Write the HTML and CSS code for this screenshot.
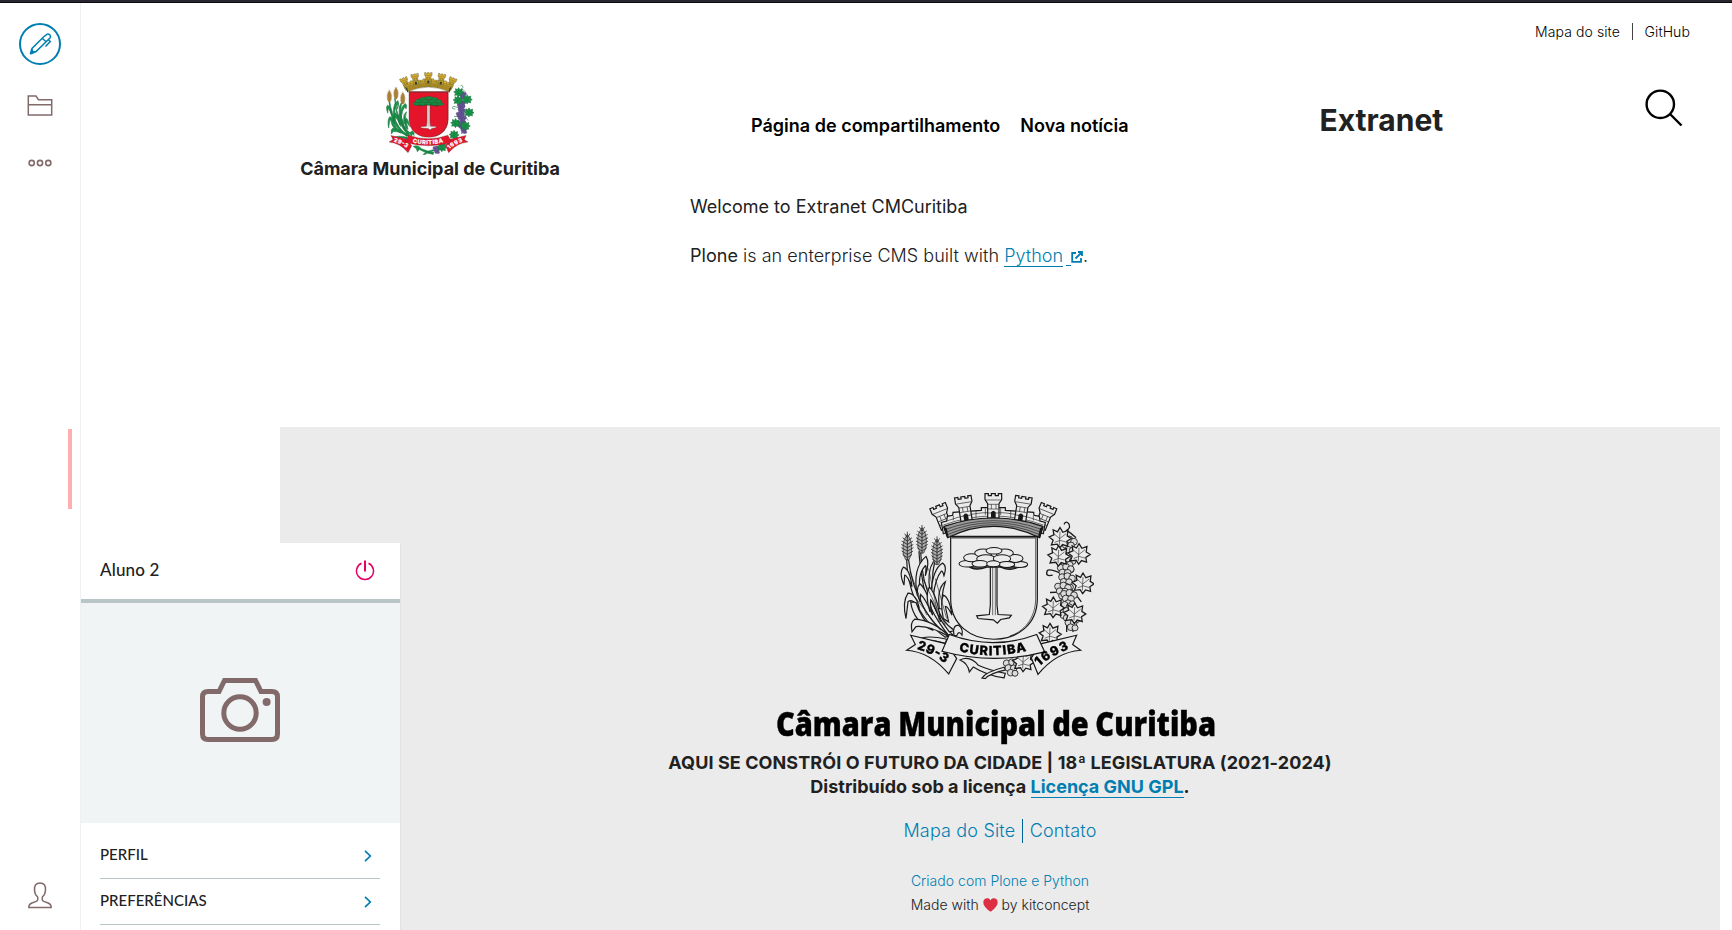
FILE: index.html
```html
<!DOCTYPE html>
<html lang="pt-BR">
<head>
<meta charset="utf-8">
<title>Extranet</title>
<link rel="stylesheet" href="styles.css">
</head>
<body>
<svg class="defs" width="0" height="0" aria-hidden="true">
  <defs>
    <g id="tower">
      <path class="gold" d="M-17 75V32L-25 20V2H-15V8H-6V2H6V8H15V2H25V20L17 32V75Z"/>
      <path class="thin" d="M-22 21H22M-16 34H16M-16 48H16M-16 60H16M-6 34V48M8 34V48"/>
      <path class="ink" d="M-7 75V58Q0 48 7 58V75Z"/>
    </g>
    <g id="leaf">
      <path class="green" transform="scale(1.08)" d="M0 -28L8 -15L22 -20L20 -5L31 2L19 10L21 23L7 19L-1 29L-8 18L-24 20L-19 7L-30 -2L-17 -8L-19 -22L-7 -16Z"/>
      <path class="vein" d="M-2 22L0 -18M0 2L18 -12M0 4L-19 -13M0 8L18 13M0 8L-16 14"/>
    </g>
    <g id="ear">
      <path class="wheat" d="M0 -40L9 -25L13 -8L12 20L5 36H-5L-12 20L-13 -8L-9 -25Z"/>
      <path class="grain" d="M0 -48V38M-14 -30L0 -20L14 -30M-17 -20L0 -10L17 -20M-18 -10L0 0L18 -10M-18 0L0 10L18 0M-17 10L0 20L17 10M-14 20L0 30L14 20M-8 -42L0 -30L8 -42"/>
    </g>
    <g id="bunch">
      <circle class="grape" cx="-14" cy="-14" r="10"/><circle class="grape" cx="2" cy="-17" r="10"/><circle class="grape" cx="16" cy="-10" r="10"/>
      <circle class="grape" cx="-9" cy="0" r="10"/><circle class="grape" cx="7" cy="1" r="10"/><circle class="grape" cx="-2" cy="14" r="10"/><circle class="grape" cx="11" cy="16" r="9"/>
    </g>
    <path id="arc-mid" d="M236 498Q342 524 448 494"/>
    <path id="arc-left" d="M110 492Q165 505 216 552"/>
    <path id="arc-right" d="M478 544Q515 508 590 484"/>
    <symbol id="crest" viewBox="60 22 582 560" preserveAspectRatio="none">
      <g class="stalks">
        <path class="green" d="M85 220Q94 300 130 365T210 450L196 456Q130 410 105 345T80 222Z"/>
        <path class="green" d="M122 200Q124 290 160 360T220 450L205 450Q142 370 130 300T117 200Z"/>
        <path class="green" d="M164 230Q150 290 166 350T224 436L208 440Q160 380 150 320T160 230Z"/>
        <path class="green" d="M78 400Q66 350 84 324Q108 325 118 370Q98 338 84 350Z"/>
        <path class="green" d="M72 300Q56 262 70 246Q90 252 96 305Q80 268 74 270Z"/>
        <path class="green" d="M112 330Q96 250 138 214Q150 232 136 272Q140 240 136 242Q110 270 122 330Z"/>
        <path class="green" d="M152 330Q158 250 188 234Q202 244 192 272Q188 256 184 258Q166 280 160 332Z"/>
        <path class="green" d="M178 370Q170 310 196 290Q180 340 190 372Z"/>
        <path class="green" d="M120 350Q104 310 120 296Q146 320 158 390Q136 340 122 328Z"/>
        <path class="green" d="M150 380Q134 330 148 306Q172 330 182 410Q160 350 152 344Z"/>
        <path class="green" d="M92 350Q100 410 160 436Q124 400 108 352Z"/>
        <path class="green" d="M190 400Q180 350 190 330Q208 336 216 390Q202 362 196 364L206 410Z"/>
        <path class="green" d="M96 440Q90 410 104 402Q160 405 210 456Q150 420 108 424Z"/>
        <path class="green" d="M222 450Q216 420 236 420Q250 430 246 450Q236 434 230 452Z"/>
        <path class="green" d="M110 468Q130 446 200 462L196 474Q150 460 110 468Z"/>
        <path class="vein" d="M90 260L140 390M104 335L182 436M146 250L178 410M128 280L196 420M166 280L200 400"/>
      </g>
      <use href="#ear" x="82" y="188"/><use href="#ear" x="126" y="168"/><use href="#ear" x="171" y="202"/>

      <path class="vine" d="M552 118Q558 106 566 116Q574 128 560 136Q576 146 588 158M560 136V440M556 270Q510 250 502 256Q494 276 518 270M560 320L510 322M560 400L580 440M566 300L604 350"/>
      <use href="#bunch" x="566" y="180"/><use href="#bunch" x="562" y="238"/><use href="#bunch" x="556" y="262"/><use href="#bunch" x="560" y="290"/><use href="#bunch" x="548" y="318"/><use href="#bunch" x="566" y="340"/><use href="#bunch" x="552" y="376"/><use href="#bunch" x="574" y="412"/>
      <use href="#leaf" x="540" y="158"/><use href="#leaf" x="597" y="206"/><use href="#leaf" x="536" y="212"/><use href="#leaf" x="609" y="294"/><use href="#leaf" x="520" y="366"/><use href="#leaf" x="584" y="384"/><use href="#leaf" x="510" y="445"/>

      <path class="green" d="M240 524Q270 510 295 540Q330 556 376 564L372 578Q320 570 280 545L268 560Q264 534 240 524Z"/>
      <path class="green" d="M306 578Q318 560 372 546L378 554Q330 564 316 580Z"/>
      <use href="#bunch" x="394" y="548"/><use href="#leaf" x="430" y="528"/>

      <use href="#tower" transform="translate(172 60) rotate(-22)"/>
      <use href="#tower" transform="translate(508 60) rotate(22)"/>
      <path class="gold" d="M190 146L184 112L200 108L202 94L218 91L219 82L304 76V68H376V76L461 82L462 91L478 94L480 108L496 112L490 146Q340 80 190 146Z"/>
      <path class="thin" d="M190 120Q340 66 490 120M200 108Q340 56 480 108M220 92V106M288 78V98M316 70V90M362 70V90M392 78V98M460 92V106"/>
      <use href="#tower" transform="translate(248 33) rotate(-9)"/>
      <use href="#tower" transform="translate(432 33) rotate(9)"/>
      <use href="#tower" transform="translate(340 24)"/>
      <path class="band" d="M192 124Q340 74 488 124L479 158Q340 90 203 158Z"/>
      <path class="thin" d="M194 134Q340 80 487 134M197 142Q340 84 484 142M200 150Q340 88 482 150"/>
      <path class="ink" d="M188 124L200 130L206 156L201 158ZM492 124L480 130L474 156L480 158Z"/>

      <path class="shield" d="M212 154H472V340C472 420 410 462 342 462S212 420 212 340Z"/>
      <path class="rim" d="M214 158H470"/>
      <path class="edge" d="M467 160V340C467 400 430 440 390 452"/>
      <path class="trunk" d="M331 236H351V360L354 388L394 390L388 398L362 403L352 414L340 404L294 400L290 392L328 388L331 360Z"/>
      <path class="thin" d="M338 242V390M346 242V390"/>
      <path class="shade" d="M258 236Q280 262 320 246H362Q400 264 428 236Z"/>
      <g class="canopy">
        <ellipse cx="262" cy="236" rx="25" ry="10"/><ellipse cx="418" cy="238" rx="25" ry="9"/>
        <ellipse cx="275" cy="218" rx="24" ry="12"/><ellipse cx="405" cy="220" rx="24" ry="12"/>
        <ellipse cx="310" cy="204" rx="26" ry="12"/><ellipse cx="374" cy="204" rx="26" ry="12"/>
        <ellipse cx="342" cy="197" rx="24" ry="10"/><ellipse cx="318" cy="221" rx="28" ry="12"/>
        <ellipse cx="366" cy="221" rx="26" ry="12"/><ellipse cx="300" cy="236" rx="24" ry="10"/><ellipse cx="380" cy="238" rx="24" ry="9"/><ellipse cx="340" cy="236" rx="20" ry="9"/>
      </g>

      <path class="ribbon" d="M92 450L200 476L230 520L206 566Q150 500 80 495L106 478Z"/>
      <path class="ribbon" d="M590 450L482 476L454 518L474 567Q530 500 602 495L578 478Z"/>
      <path class="ribbon" d="M208 448Q340 496 470 448L494 500Q340 540 186 498Z"/>
      <text class="motto"><textPath href="#arc-mid" textLength="206">CURITIBA</textPath></text>
      <text class="motto"><textPath href="#arc-left" textLength="96">29-3</textPath></text>
      <text class="motto"><textPath href="#arc-right" textLength="104">1693</textPath></text>
    </symbol>
  </defs>
</svg>

<div class="topline"></div>
<div class="app">
  <aside class="toolbar">
    <div class="toolbar-top">
      <a class="edit" href="#"><svg width="42" height="42" viewBox="0 0 42 42" fill="none" stroke="#007eb1">
        <circle cx="21" cy="21" r="20" stroke-width="2"/>
        <path stroke-width="1.5" d="M11.300 31L13 25.500L24.500 14L28.200 11.200Q29.400 10.600 30.600 11.800L31.300 12.600Q32 13.800 31 15L17 28.500L11.300 31M13 25.500L13.500 29L17 28.500M23.200 15.300L27.400 19M29.500 17L31.300 18.500L26.500 23.500"/>
      </svg></a>
      <a class="tool folder" href="#"><svg width="26" height="22" viewBox="0 0 26 22" fill="none" stroke="#826a6a" stroke-width="1.500"><path d="M1.300 1H9L11.500 4.700H24.700V20H1.300ZM1.300 9.700H24.700"/></svg></a>
      <a class="tool" href="#"><svg width="24" height="8" viewBox="0 0 24 8" fill="none" stroke="#826a6a" stroke-width="1.600"><circle cx="3.700" cy="4" r="2.600"/><circle cx="12" cy="4" r="2.600"/><circle cx="20.300" cy="4" r="2.600"/></svg></a>
    </div>
    <a class="user" href="#"><svg width="24" height="27" viewBox="0 0 24 27" fill="none" stroke="#826a6a" stroke-width="1.500"><path d="M9.700 15Q6.700 12.500 6.500 8.200Q6 1 12 1T17.500 8.200Q17.300 12.500 14.300 15V18Q15 19.500 19.500 20.800Q23.200 22 23.200 25.500H.8Q.8 22 4.500 20.800Q9 19.500 9.700 18Z"/></svg></a>
    <div class="handle"></div>
  </aside>

  <div class="page">
    <header>
      <nav class="tools"><a href="#">Mapa do site</a><a href="#">GitHub</a></nav>
      <div class="head">
        <a class="logo" href="#">
          <svg class="crest color" width="88" height="83"><use href="#crest"/></svg>
          <strong>Câmara Municipal de Curitiba</strong>
        </a>
        <nav class="menu"><a href="#">Página de compartilhamento</a><a href="#">Nova notícia</a></nav>
        <div class="site">Extranet</div>
        <a class="search" href="#"><svg width="38" height="38" viewBox="0 0 38 38" fill="none" stroke="#000" stroke-width="2.400"><circle cx="15.300" cy="15.300" r="13.700"/><path d="M25 25L36.500 36.500"/></svg></a>
      </div>
    </header>
    <main>
      <p class="welcome">Welcome to Extranet CMCuritiba</p>
      <p class="intro"><span>Plone</span> is an enterprise CMS built with <a href="#"><u>Python</u><i></i><svg width="12" height="12" viewBox="0 0 12 12" fill="none" stroke="#007eb1" stroke-width="1.800"><path d="M5 2H1.200V10.800H10V7M7 1H11V5M11 1L4.500 7.500"/></svg></a>.</p>
    </main>
    <footer>
      <svg class="brand crest mono" width="460" height="260" viewBox="0 0 460 260">
        <use href="#crest" x="130" y="2.300" width="194" height="187"/>
        <text class="brand-name" x="6" y="245.600" textLength="440" lengthAdjust="spacingAndGlyphs">Câmara Municipal de Curitiba</text>
      </svg>
      <div class="legal"><div class="slogan">AQUI SE CONSTRÓI O FUTURO DA CIDADE | 18ª LEGISLATURA (2021-2024)</div><div>Distribuído sob a licença <a href="#">Licença GNU GPL</a>.</div></div>
      <nav class="links"><a href="#">Mapa do Site</a><a href="#">Contato</a></nav>
      <div class="credits"><a href="#">Criado com Plone e Python</a>
        <div>Made with <svg width="15" height="14" viewBox="0 0 15 14"><path fill="#dd2e44" d="M7.500 13.800C3 10.500 .3 7.500 .3 4.200C.3 .2 5.500-1.100 7.500 2.400C9.500-1.100 14.700 .2 14.700 4.200C14.700 7.500 12 10.500 7.500 13.800Z"/></svg> by kitconcept</div>
      </div>
    </footer>
  </div>
</div>

<section class="panel">
  <div class="panel-head"><span>Aluno 2</span>
    <svg width="20" height="22" viewBox="0 0 20 22" fill="none" stroke="#e40166"><path stroke-width="1.500" d="M6.500 3.300A8.500 8.500 0 1 0 13.500 3.300"/><path stroke-width="2" d="M10 .5V11.500"/></svg>
  </div>
  <div class="avatar">
    <svg width="80" height="65" viewBox="0 0 80 65" fill="none" stroke="#826a6a" stroke-width="5"><path d="M8 13.500H19L24.500 2.500H55.500L61 13.500H72Q77.500 13.500 77.500 19V56Q77.500 61.500 72 61.500H8Q2.500 61.500 2.500 56V19Q2.500 13.500 8 13.500Z"/><circle cx="40" cy="35" r="16.200"/><circle cx="66.600" cy="24" r="4" fill="#826a6a" stroke="none"/></svg>
  </div>
  <ul>
    <li><span>PERFIL</span><svg width="8" height="12" viewBox="0 0 8 12"><path fill="none" stroke="#007eb1" stroke-width="1.700" d="M1 .8L6.300 6L1 11.200"/></svg></li>
    <li><span>PREFERÊNCIAS</span><svg width="8" height="12" viewBox="0 0 8 12"><path fill="none" stroke="#007eb1" stroke-width="1.700" d="M1 .8L6.300 6L1 11.200"/></svg></li>
  </ul>
</section>
</body>
</html>
```
FILE: styles.css
```css
* { box-sizing: border-box; }
html, body { margin: 0; height: 100%; overflow: hidden; }
body { background: #fff; color: #212121; font: 300 18px/24px Inter, "Liberation Sans", sans-serif; }
a { color: #007eb1; text-decoration: none; }
svg { display: block; }
.defs { position: absolute; }

.topline { height: 3px; background: #29252e; border-bottom: 1px solid #0b090d; }
.app { display: flex; height: 927px; }

/* Left toolbar */
.toolbar { position: relative; width: 81px; border-right: 1px solid #edf1f2; display: flex; flex-direction: column; justify-content: space-between; padding: 20px 0 21px; }
.toolbar-top { display: flex; flex-direction: column; align-items: center; }
.folder { margin: 30px 0 42px; }
.user { align-self: center; }
.handle { position: absolute; right: 8px; top: 426px; width: 4px; height: 80px; background: #ffafaf; }

/* Page */
.page { width: 1440px; margin-left: 199px; display: flex; flex-direction: column; }
header { height: 192px; }
.tools { display: flex; justify-content: flex-end; padding: 20px 30px 0 0; font-size: 14px; line-height: 17px; letter-spacing: .1px; }
.tools a { color: #000; }
.tools a + a { margin-left: 11.5px; padding-left: 12px; border-left: 1px solid #444; }
.head { display: flex; padding: 32px 37px 0 20px; }
.logo { width: 260px; color: #212121; display: flex; flex-direction: column; align-items: center; white-space: nowrap; }
.logo svg { margin-left: -1px; }
.logo strong { font-weight: 700; margin-top: 2px; }
.menu { display: flex; gap: 20px; width: 568.5px; margin: 42px 0 0 191px; font-weight: 600; white-space: nowrap; letter-spacing: .01px; }
.menu a { color: #000; }
.site { font-size: 30px; line-height: 36px; font-weight: 700; margin-top: 30px; }
.search { margin: 17px 0 0 auto; }

main { height: 232px; padding-left: 410px; }
main p { margin: 0 0 25px; white-space: nowrap; }
.welcome { font-weight: 400; }
.intro { letter-spacing: .03px; }
.intro span { font-weight: 400; }
.intro a { display: inline-block; line-height: 20px; }
.intro u { display: inline-block; text-decoration: none; border-bottom: 1px solid #007eb1; }
.intro i { display: inline-block; width: 5px; height: 1px; margin-left: 3px; background: #007eb1; vertical-align: -4px; }
.intro svg { display: inline-block; vertical-align: -1px; }

footer { flex: 1; background: #ebebeb; padding-top: 63px; display: flex; flex-direction: column; align-items: center; }
.legal { text-align: center; font-weight: 700; margin-top: 1px; }
.slogan { letter-spacing: .09px; }
.legal a { display: inline-block; line-height: 20px; border-bottom: 1px solid #007eb1; }
.legal div { height: 24px; }
.links { display: flex; margin-top: 20px; letter-spacing: .16px; }
.links a + a { margin-left: 6.5px; padding-left: 7px; border-left: 1px solid #00639a; }
.credits { margin-top: 26px; text-align: center; font-size: 14px; letter-spacing: .02px; }
.credits svg { display: inline-block; vertical-align: -2px; }
.brand-name { font: 800 33px "Open Sans", "Noto Sans", sans-serif; fill: #000; stroke: #000; stroke-width: .4; word-spacing: -1px; }

/* Coat of arms */
.crest { overflow: visible; }
.color { --line: #30402f; --w: 2; --gold: #d9ac2c; --band: #c99c25; --green: #179447; --leaf-line: #1b7340; --wheat: #b58a3a; --grain: #94753a; --grape: #6b569d; --grape-line: #4d4378; --shield: #e4152b; --ribbon: #e4152b; --motto: #fff; --trunk: #f4eeee; --canopy: #188b43; --canopy-line: #1c5f35; }
.mono { --line: #171717; --w: 3.6; --gold: #ebebeb; --band: #999; --green: #ebebeb; --leaf-line: #1c1c1c; --wheat: #b0b0b0; --grain: #222; --grape: #dcdcdc; --grape-line: #1c1c1c; --shield: #ebebeb; --ribbon: #ebebeb; --motto: #000; --trunk: #ebebeb; --canopy: #ebebeb; --canopy-line: #171717; filter: blur(.35px); }
.gold, .band, .shield, .ribbon, .trunk, .shade { stroke: var(--line); stroke-width: var(--w); }
.gold { fill: var(--gold); }
.band { fill: var(--band); }
.green { fill: var(--green); stroke: var(--leaf-line); stroke-width: 3.6; }
.wheat { fill: var(--wheat); stroke: var(--grain); stroke-width: 2; }
.grape { fill: var(--grape); stroke: var(--grape-line); stroke-width: 2.6; }
.shield { fill: var(--shield); }
.ribbon { fill: var(--ribbon); }
.trunk { fill: var(--trunk); }
.canopy { fill: var(--canopy); stroke: var(--canopy-line); stroke-width: 3; }
.shade { fill: var(--line); fill-opacity: .7; }
.ink { fill: var(--line); }
.thin { fill: none; stroke: var(--line); stroke-width: 1.8; }
.vein { fill: none; stroke: var(--leaf-line); stroke-width: 1.8; }
.grain { fill: none; stroke: var(--grain); stroke-width: 2.4; }
.vine { fill: none; stroke: var(--leaf-line); stroke-width: 4; }
.rim { fill: none; stroke: var(--line); stroke-width: 5; opacity: .7; }
.edge { fill: none; stroke: var(--line); stroke-width: 2; }
.motto { font: 800 38px Inter, "Liberation Sans", sans-serif; fill: var(--motto); stroke: var(--motto); stroke-width: 1; }

/* User panel */
.panel { position: absolute; left: 80px; top: 543px; width: 321px; height: 387px; overflow: hidden; background: #fff; border-right: 1px solid #dfe3e4; border-left: 1px solid #edf1f2; font-family: Lato, "Liberation Sans", sans-serif; font-weight: 500; }
.panel-head { height: 60px; padding: 0 25px 0 19px; border-bottom: 4px solid #b8c6c8; display: flex; align-items: center; justify-content: space-between; font-size: 17px; letter-spacing: .15px; }
.panel-head span { margin-top: -2px; }
.avatar { height: 220px; background: #f0f4f5; padding: 75px 0 0 119px; }
.panel ul { list-style: none; margin: 0; padding: 10px 20px 10px 19px; }
.panel li { height: 46px; border-bottom: 1px solid #b8c6c8; display: flex; align-items: center; justify-content: space-between; padding-right: 8px; font-size: 15px; }
.panel li span { margin-top: -3px; }
```
